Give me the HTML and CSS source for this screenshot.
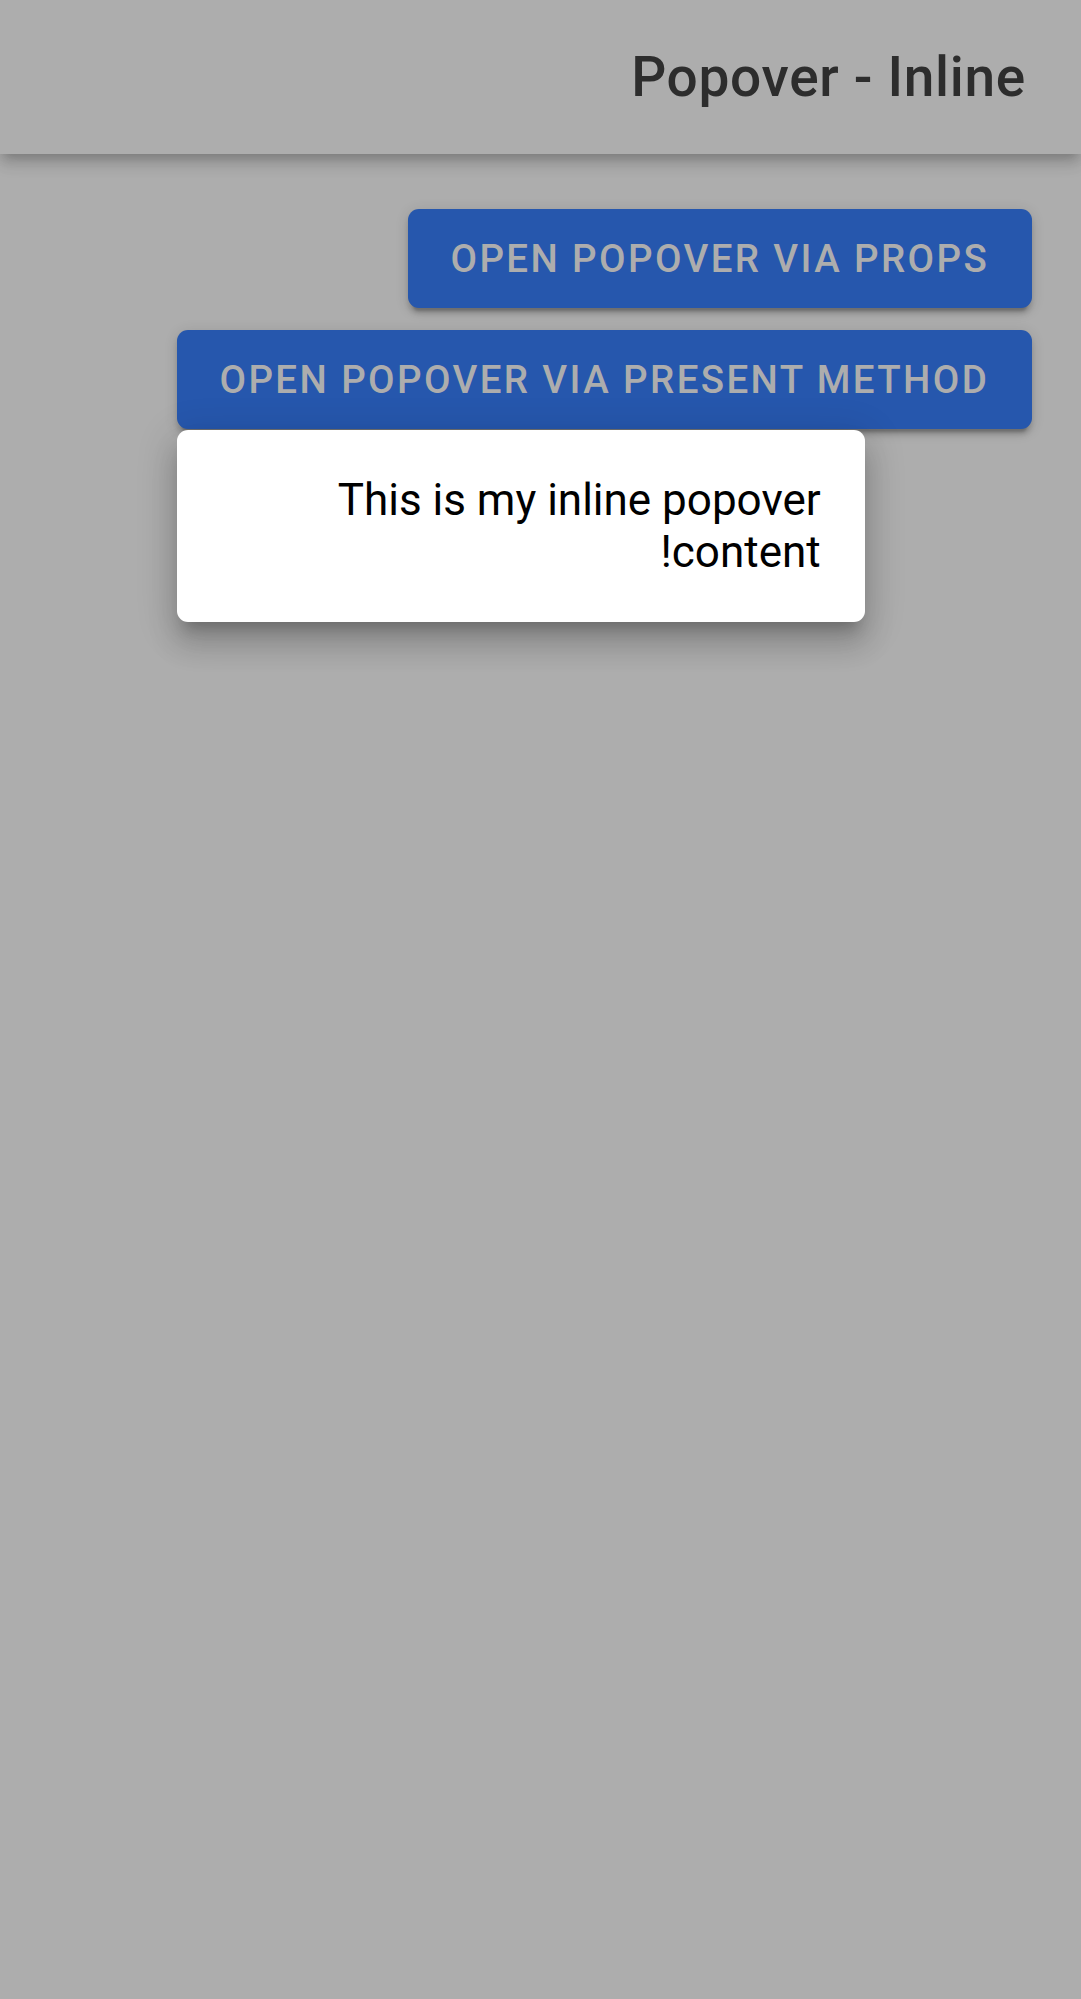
FILE: index.html
```html
<!DOCTYPE html>
<html lang="en" dir="rtl">
<head>
<meta charset="utf-8">
<title>Popover - Inline</title>
<link rel="stylesheet" href="styles.css">
</head>
<body>
<header class="toolbar">
  <div class="title">Popover - Inline</div>
</header>
<main class="content">
  <div class="buttons">
    <button class="btn">Open Popover via Props</button>
    <div class="trigger">
      <button class="btn">Open Popover via Present Method</button>
      <div class="popover">
        <div class="popover-content">This is my inline popover content!</div>
      </div>
    </div>
  </div>
</main>
</body>
</html>
```
FILE: styles.css
```css
html, body {
  margin: 0;
  padding: 0;
}
body {
  background: #adadad;
  font-family: Roboto, "Noto Sans", sans-serif;
  width: 1081px;
  height: 1999px;
  overflow: hidden;
}
.toolbar {
  position: relative;
  z-index: 2;
  height: 154px;
  display: flex;
  align-items: center;
  padding: 0 55px;
  background: #adadad;
  box-shadow: 0 5.5px 11px -2.75px rgba(0,0,0,0.2), 0 11px 14px 0 rgba(0,0,0,0.1), 0 2.75px 27px 0 rgba(0,0,0,0.06);
}
.title {
  font-size: 55px;
  font-weight: 500;
  letter-spacing: 0.0125em;
  color: #2d2d2d;
}
.content {
  padding: 44px;
}
.buttons {
  display: flex;
  flex-direction: column;
  align-items: flex-start;
}
.trigger {
  position: relative;
  display: flex;
}
.btn {
  height: 99px;
  margin: 11px 5.5px;
  padding: 0 42.35px;
  border: none;
  border-radius: 11px;
  background: #2657ad;
  color: #adadad;
  font-family: Roboto, "Noto Sans", sans-serif;
  font-size: 38.5px;
  font-weight: 500;
  letter-spacing: 2.38px;
  text-transform: uppercase;
  box-shadow: 0 8.25px 2.75px -5.5px rgba(0,0,0,0.2), 0 5.5px 5.5px 0 rgba(0,0,0,0.14), 0 2.75px 13.75px 0 rgba(0,0,0,0.12);
}
.popover {
  position: absolute;
  top: calc(100% - 10px);
  left: 5.5px;
  width: 687.5px;
  background: #ffffff;
  border-radius: 11px;
  box-shadow: 0 13.75px 13.75px -8.25px rgba(0,0,0,0.2), 0 22px 27.5px 2.75px rgba(0,0,0,0.14), 0 8.25px 38.5px 5.5px rgba(0,0,0,0.12);
  z-index: 3;
}
.popover-content {
  padding: 44px;
  font-size: 44px;
  color: #000;
}
```
